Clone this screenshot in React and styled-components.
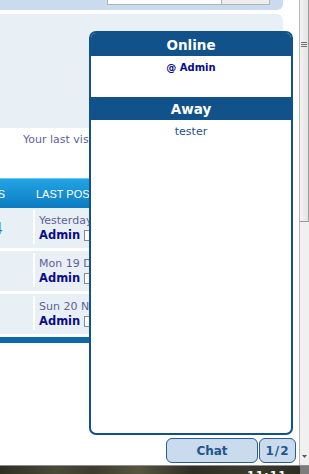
import React from 'react';
import styled, {createGlobalStyle} from 'styled-components';

const Global = createGlobalStyle`
  html, body {
    margin: 0;
    padding: 0;
    background: #ffffff;
    overflow: hidden;
  }
  body {
    font-family: "DejaVu Sans", Verdana, sans-serif;
  }
`;

const Shell = styled.div`
  width: 309px;
  height: 474px;
  display: flex;
  flex-direction: column;
  overflow: hidden;
`;

const Viewport = styled.div`
  position: relative;
  flex: 1;
  display: flex;
  min-height: 0;
  overflow: hidden;
`;

const Page = styled.div`
  flex: 1;
  display: flex;
  flex-direction: column;
  overflow: hidden;
  background: #ffffff;
`;

const TopBar = styled.div`
  width: 283px;
  height: 10px;
  box-sizing: border-box;
  padding: 0 0 5px 107px;
  display: flex;
  align-items: flex-end;
  background: #c9dbec;
  border-bottom-right-radius: 6px;
  overflow: hidden;
`;

const SearchInput = styled.div`
  flex-shrink: 0;
  width: 115px;
  height: 16px;
  box-sizing: border-box;
  border: 1px solid #b4b4b4;
  background: #ffffff;
`;

const SearchButton = styled.div`
  flex-shrink: 0;
  width: 48px;
  height: 16px;
  box-sizing: border-box;
  border: 1px solid #b4b4b4;
  border-left: none;
  background: #ededed;
`;

const Hero = styled.div`
  margin-top: 4px;
  width: 283px;
  height: 114px;
  flex-shrink: 0;
  background: #e9f0f5;
  border-top-right-radius: 6px;
`;

const LastVisit = styled.div`
  margin-top: 5px;
  padding-left: 23px;
  font-size: 11px;
  line-height: 14px;
  color: #5f5f96;
  white-space: nowrap;
`;

const Table = styled.div`
  margin-top: 31px;
  width: 283px;
  display: flex;
  flex-direction: column;
  gap: 3px;
`;

const HeadRow = styled.div`
  height: 30px;
  box-sizing: border-box;
  display: grid;
  grid-template-columns: 36px 1fr;
  align-items: center;
  border-top: 1px solid #6ccaf4;
  background: linear-gradient(#22a4e4, #0c7bc2);
  color: #ffffff;
  font-family: "Liberation Sans", Arial, sans-serif;
  font-size: 11px;
  white-space: nowrap;
  margin-bottom: -3px;
`;

const ClipCell = styled.div`
  display: flex;
  justify-content: flex-end;
  overflow: hidden;
  padding-right: ${p => p.$pad || 0}px;
  color: ${p => p.$color || 'inherit'};
`;

const HeadLabel = styled.div`
  overflow: hidden;
`;

const Row = styled.div`
  height: 40px;
  display: grid;
  grid-template-columns: 33px 2px 1fr;
  align-items: center;
  background: #e8f0f5;
`;

const Divider = styled.div`
  align-self: stretch;
  margin: 2px 0 4px;
  background: #ffffff;
`;

const PostCell = styled.div`
  align-self: start;
  padding: 6px 0 0 4px;
  overflow: hidden;
  white-space: nowrap;
  font-size: 11px;
  line-height: 14px;
  color: #5f5f96;
`;

const Author = styled.div`
  display: flex;
  align-items: center;
  gap: 4px;
  font-size: 11.5px;
  font-weight: bold;
  color: #0b0b8a;
`;

const PostIcon = styled.span`
  display: inline-block;
  width: 6px;
  height: 9px;
  border: 1px solid #8a8a8a;
  background: #ffffff;
`;

const TableFoot = styled.div`
  height: 6px;
  background: #0c6aa9;
`;

const Popup = styled.div`
  position: absolute;
  left: 89px;
  top: 31px;
  width: 204px;
  height: 404px;
  box-sizing: border-box;
  display: flex;
  flex-direction: column;
  border: 2px solid #12528a;
  border-radius: 7px;
  background: #ffffff;
  overflow: hidden;
`;

const SectionHead = styled.div`
  height: 23px;
  flex-shrink: 0;
  display: flex;
  align-items: center;
  justify-content: center;
  background: #12528a;
  color: #ffffff;
  font-size: 13.5px;
  font-weight: bold;
`;

const SectionBody = styled.div`
  height: ${p => (p.$fill ? 'auto' : `${p.$h}px`)};
  flex: ${p => (p.$fill ? 1 : 'none')};
  padding-top: ${p => p.$top}px;
  box-sizing: border-box;
  text-align: center;
  font-size: ${p => (p.$bold ? 10 : 11)}px;
  line-height: 12px;
  font-weight: ${p => (p.$bold ? 'bold' : 'normal')};
  color: ${p => (p.$bold ? '#0b0b8a' : '#1f4f8f')};
`;

const ChatBar = styled.div`
  position: absolute;
  left: 166px;
  top: 438px;
  display: flex;
  gap: 1px;
`;

const ChatButton = styled.div`
  width: ${p => p.$w}px;
  height: 25px;
  box-sizing: border-box;
  display: flex;
  align-items: center;
  justify-content: center;
  border: 1px solid #2a5c90;
  border-radius: 6px;
  background: #c9dbec;
  color: #23558d;
  font-size: 12px;
  font-weight: bold;
  letter-spacing: ${p => p.$ls || 0}px;
`;

const Scrollbar = styled.div`
  width: 10px;
  flex-shrink: 0;
  display: flex;
  flex-direction: column;
  border-left: 1px solid #b8b8b8;
  box-sizing: border-box;
  background: #f0f0f0;
`;

const Thumb = styled.div`
  height: 222px;
  box-sizing: border-box;
  padding-top: 42px;
  border: 1px solid #9c9c9c;
  border-top: none;
  border-left: none;
  background: linear-gradient(to right, #f3f3f3, #e3e3e3);
  display: flex;
  flex-direction: column;
  align-items: center;
  gap: 1px;
`;

const Grip = styled.div`
  width: 6px;
  height: 1px;
  background: #707070;
`;

const Track = styled.div`
  flex: 1;
  display: flex;
  align-items: flex-end;
  justify-content: center;
  padding-bottom: 7px;
`;

const Taskbar = styled.div`
  height: 9px;
  flex-shrink: 0;
  display: flex;
  box-sizing: border-box;
  border-top: 1px solid #8e8e8e;
  background: linear-gradient(to right, #2e2e24 0%, #4a4a38 18%, #3d3c2f 30%, #57553f 45%, #2f2f25 62%, #3a3a2e 80%, #2c2c23 100%);
  overflow: hidden;
`;

const Clock = styled.div`
  margin-left: 247px;
  padding-top: 3px;
  color: #ffffff;
  font-size: 11px;
  font-weight: bold;
  line-height: 13px;
  letter-spacing: 1px;
`;

const Corner = styled.div`
  margin-left: auto;
  width: 9px;
  background: #7c7c7c;
`;

const rows = [
    {count: '34', when: 'Yesterday at 10:14 pm'},
    {count: '', when: 'Mon 19 Dec - 21:32'},
    {count: '', when: 'Sun 20 Nov - 15:08'},
];

function App() {
    return (
        <Shell>
            <Global/>
            <Viewport>
                <Page>
                    <TopBar>
                        <SearchInput/>
                        <SearchButton/>
                    </TopBar>
                    <Hero/>
                    <LastVisit>Your last visit was on Thu 22 Dec - 9:12</LastVisit>
                    <Table>
                        <HeadRow>
                            <ClipCell $pad={31}>POSTS</ClipCell>
                            <HeadLabel>LAST POST</HeadLabel>
                        </HeadRow>
                        {rows.map((r, i) => (
                            <Row key={i}>
                                <ClipCell $pad={30} $color="#2a7fc9">{r.count}</ClipCell>
                                <Divider/>
                                <PostCell>
                                    <div>{r.when}</div>
                                    <Author>Admin <PostIcon/></Author>
                                </PostCell>
                            </Row>
                        ))}
                        <TableFoot/>
                    </Table>
                </Page>
                <Scrollbar>
                    <Thumb>
                        <Grip/>
                        <Grip/>
                        <Grip/>
                    </Thumb>
                    <Track>
                        <svg width="5" height="3" viewBox="0 0 5 3">
                            <path d="M0 0 H5 L2.5 3 Z" fill="#555"/>
                        </svg>
                    </Track>
                </Scrollbar>

                <Popup>
                    <SectionHead>Online</SectionHead>
                    <SectionBody $h={41} $top={6} $bold>@ Admin</SectionBody>
                    <SectionHead>Away</SectionHead>
                    <SectionBody $fill $top={6}>tester</SectionBody>
                </Popup>

                <ChatBar>
                    <ChatButton $w={92}>Chat</ChatButton>
                    <ChatButton $w={37} $ls={1}>1/2</ChatButton>
                </ChatBar>
            </Viewport>
            <Taskbar>
                <Clock>11:11</Clock>
                <Corner/>
            </Taskbar>
        </Shell>
    );
}

export default App;
